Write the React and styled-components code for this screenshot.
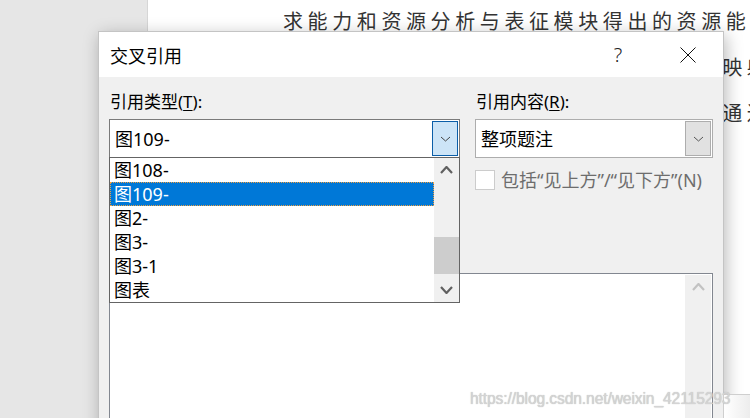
import styled, { createGlobalStyle } from 'styled-components';

const GlobalStyle = createGlobalStyle`
  html, body {
    margin: 0;
    padding: 0;
    overflow: hidden;
  }

  body {
    font-family: "Noto Sans", "Noto Sans CJK SC", sans-serif;
  }
`;

const TYPE_ITEMS = ['图108-', '图109-', '图2-', '图3-', '图3-1', '图表'];

const DOC_LINES = [
  { text: '求能力和资源分析与表征模块得出的资源能力状态，', indent: true },
  { text: '力进行综合匹配，得到服务需求与资源能力之间的映射关系，', indent: false },
  { text: '系，从而为后续的调度决策提供依据。在此基础上通过：', indent: false },
];

function Chevron({ up = false, bold = false, color = '#444' }) {
  const w = bold ? 13 : 11;
  const h = bold ? 8 : 6;
  const points = up
    ? `1,${h - 1} ${w / 2},1 ${w - 1},${h - 1}`
    : `1,1 ${w / 2},${h - 1} ${w - 1},1`;

  return (
    <svg width={w} height={h} viewBox={`0 0 ${w} ${h}`}>
      <polyline
        points={points}
        fill="none"
        stroke={color}
        strokeWidth={bold ? 2.2 : 1}
      />
    </svg>
  );
}

function CloseIcon() {
  return (
    <svg width="16" height="16" viewBox="0 0 16 16">
      <line x1="0.5" y1="0.5" x2="15.5" y2="15.5" stroke="#111" strokeWidth="1" />
      <line x1="15.5" y1="0.5" x2="0.5" y2="15.5" stroke="#111" strokeWidth="1" />
    </svg>
  );
}

function App() {
  return (
    <>
      <GlobalStyle />
      <Screen>
        <Gutter />
        <Page>
          {DOC_LINES.map((line) => (
            <DocLine key={line.text} $indent={line.indent}>
              {line.text}
            </DocLine>
          ))}
        </Page>

        <Dialog>
          <TitleBar>
            <Title>交叉引用</Title>
            <TitleButton>?</TitleButton>
            <TitleButton>
              <CloseIcon />
            </TitleButton>
          </TitleBar>

          <Body>
            <Column>
              <Label>
                引用类型(<u>T</u>):
              </Label>
              <ComboWrap>
                <Combo>
                  <ComboText>图109-</ComboText>
                  <ComboButton $focused>
                    <Chevron />
                  </ComboButton>
                </Combo>

                <Popup>
                  <ItemList>
                    {TYPE_ITEMS.map((item) => (
                      <Item key={item} $selected={item === '图109-'}>
                        {item}
                      </Item>
                    ))}
                  </ItemList>
                  <ScrollBar $wide>
                    <ScrollArrow>
                      <Chevron up bold color="#606060" />
                    </ScrollArrow>
                    <ScrollTrack>
                      <Thumb />
                    </ScrollTrack>
                    <ScrollArrow>
                      <Chevron bold color="#606060" />
                    </ScrollArrow>
                  </ScrollBar>
                </Popup>
              </ComboWrap>
            </Column>

            <Column>
              <Label>
                引用内容(<u>R</u>):
              </Label>
              <Combo $light>
                <ComboText>整项题注</ComboText>
                <ComboButton>
                  <Chevron color="#555" />
                </ComboButton>
              </Combo>
              <CheckRow>
                <CheckBox />
                <CheckLabel>包括“见上方”/“见下方”(N)</CheckLabel>
              </CheckRow>
            </Column>

            <CaptionSection>
              <Label>
                引用哪一个题注(<u>W</u>):
              </Label>
              <CaptionList>
                <CaptionArea />
                <ScrollBar>
                  <ScrollArrow>
                    <Chevron up bold color="#c2c2c2" />
                  </ScrollArrow>
                </ScrollBar>
              </CaptionList>
            </CaptionSection>
          </Body>
        </Dialog>

        <CornerBox />
        <Watermark>https://blog.csdn.net/weixin_42115293</Watermark>
      </Screen>
    </>
  );
}

export default App;

const Screen = styled.div`
  position: relative;
  display: flex;
  width: 750px;
  height: 418px;
  overflow: hidden;
  background-color: #ffffff;
`;

const Gutter = styled.div`
  width: 147px;
  flex-shrink: 0;

  border-right: 1px solid #d6d6d6;
  background-color: #e6e6e6;
`;

const Page = styled.div`
  flex: 1;
  min-width: 0;
  padding-left: 33px;
  margin-top: -2px;
  overflow: hidden;
`;

const DocLine = styled.div`
  height: 46px;

  color: #333;
  font-family: "Noto Sans CJK SC", sans-serif;
  font-size: 20px;
  font-weight: 400;
  line-height: 46px;
  letter-spacing: 4.6px;
  white-space: nowrap;
  text-indent: ${({ $indent }) => ($indent ? '102px' : '0')};
`;

const Dialog = styled.div`
  position: absolute;
  top: 31px;
  left: 98px;
  width: 626px;
  height: 420px;
  box-sizing: border-box;

  border: 1px solid #c4c4c4;
  background-color: #f0f0f0;
  box-shadow: 2px 4px 16px rgba(0, 0, 0, 0.28);
`;

const TitleBar = styled.div`
  display: flex;
  align-items: center;
  height: 45px;
  padding-left: 11px;

  background-color: #ffffff;
`;

const Title = styled.div`
  flex: 1;

  color: #000;
  font-family: "Noto Sans CJK SC", sans-serif;
  font-size: 18px;
`;

const TitleButton = styled.div`
  display: flex;
  justify-content: center;
  align-items: center;
  width: 70px;
  height: 45px;

  color: #222;
  font-family: "Noto Sans", sans-serif;
  font-size: 20px;
  font-weight: 300;
`;

const Body = styled.div`
  display: grid;
  grid-template-columns: 351px 238px;
  column-gap: 15px;
  align-items: start;
  padding: 13px 10px 0 10px;
`;

const Column = styled.div`
  display: flex;
  flex-direction: column;
`;

const Label = styled.div`
  height: 24px;
  margin-bottom: 5px;
  padding-left: 1px;

  color: #000;
  font-size: 17px;
  line-height: 24px;
  white-space: nowrap;

  u {
    text-underline-offset: 2px;
  }
`;

const ComboWrap = styled.div`
  position: relative;
  z-index: 2;
`;

const Combo = styled.div`
  display: flex;
  align-items: center;
  height: 39px;
  box-sizing: border-box;
  padding: 1px;

  border: 1px solid ${({ $light }) => ($light ? '#adadad' : '#7a7a7a')};
  background-color: #ffffff;
`;

const ComboText = styled.div`
  flex: 1;
  padding-left: 4px;

  color: #000;
  font-size: 18px;
  line-height: 24px;
`;

const ComboButton = styled.div`
  display: flex;
  justify-content: center;
  align-items: center;
  width: 26px;
  height: 35px;
  box-sizing: border-box;

  border: 1px solid ${({ $focused }) => ($focused ? '#0b5ea8' : '#adadad')};
  background-color: ${({ $focused }) => ($focused ? '#cce4f7' : '#e1e1e1')};
`;

const Popup = styled.div`
  position: absolute;
  top: calc(100% - 1px);
  left: 0;
  display: flex;
  width: 351px;
  height: 146px;
  box-sizing: border-box;

  border: 1px solid #646464;
  background-color: #ffffff;
`;

const ItemList = styled.div`
  flex: 1;
  display: flex;
  flex-direction: column;
`;

const Item = styled.div`
  height: 24px;
  box-sizing: border-box;
  padding-left: 3px;

  border: 1px ${({ $selected }) => ($selected ? 'dotted #f0a040' : 'solid transparent')};
  background-color: ${({ $selected }) => ($selected ? '#0078d7' : 'transparent')};

  color: ${({ $selected }) => ($selected ? '#ffffff' : '#000')};
  font-size: 18px;
  line-height: 22px;
  white-space: nowrap;
`;

const ScrollBar = styled.div`
  display: flex;
  flex-direction: column;
  width: ${({ $wide }) => ($wide ? '25px' : '26px')};

  background-color: #f0f0f0;
`;

const ScrollArrow = styled.div`
  display: flex;
  justify-content: center;
  align-items: center;
  height: 24px;
`;

const ScrollTrack = styled.div`
  flex: 1;
`;

const Thumb = styled.div`
  height: 37px;
  margin-top: 55px;

  background-color: #cdcdcd;
`;

const CheckRow = styled.div`
  display: flex;
  align-items: center;
  gap: 6px;
  margin-top: 11px;
`;

const CheckBox = styled.div`
  width: 20px;
  height: 20px;
  box-sizing: border-box;

  border: 1px solid #cccccc;
  background-color: #ffffff;
`;

const CheckLabel = styled.div`
  color: #6d6d6d;
  font-size: 18px;
  line-height: 22px;
  white-space: nowrap;
`;

const CaptionSection = styled.div`
  grid-column: 1 / -1;
  display: flex;
  flex-direction: column;
  margin-top: 53px;
`;

const CaptionList = styled.div`
  display: flex;
  height: 160px;
  padding: 1px;

  border: 1px solid #828790;
  background-color: #ffffff;
`;

const CaptionArea = styled.div`
  flex: 1;
`;

const CornerBox = styled.div`
  position: absolute;
  right: -2px;
  bottom: -4px;
  width: 27px;
  height: 26px;

  border: 1px solid #cfcfcf;
  background: linear-gradient(to right, #ffffff, #ececec);
`;

const Watermark = styled.div`
  position: absolute;
  top: 390px;
  left: 470px;

  color: #d4d4d4;
  font-family: "Liberation Sans", Arial, sans-serif;
  font-size: 15.6px;
  letter-spacing: -0.1px;
  text-shadow: 0 0 1px #b4b4b4;
  white-space: nowrap;
`;
